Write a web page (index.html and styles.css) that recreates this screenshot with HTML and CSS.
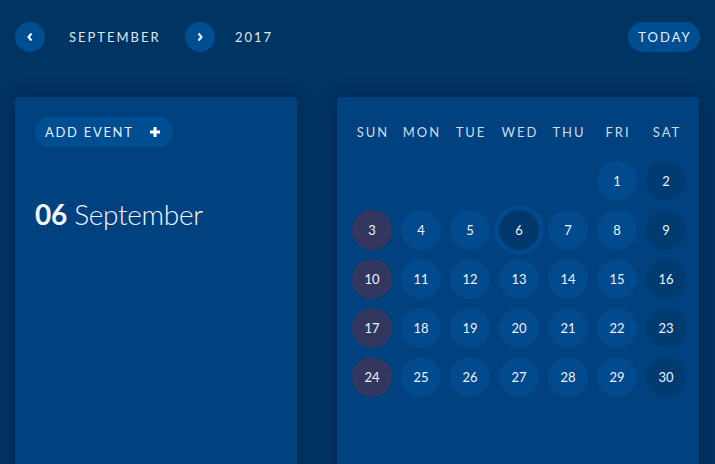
FILE: index.html
```html
<!DOCTYPE html>
<html lang="en">
<head>
<meta charset="utf-8">
<title>Calendar</title>
<link rel="stylesheet" href="styles.css">
</head>
<body>
<header class="topbar">
  <button class="nav-btn" aria-label="Previous month">
    <svg width="8" height="10" viewBox="0 0 8 10"><polyline points="5.5,1.5 2.5,5 5.5,8.5" fill="none" stroke="#fff" stroke-width="2"/></svg>
  </button>
  <span class="month">SEPTEMBER</span>
  <button class="nav-btn" aria-label="Next month">
    <svg width="8" height="10" viewBox="0 0 8 10"><polyline points="2.5,1.5 5.5,5 2.5,8.5" fill="none" stroke="#fff" stroke-width="2"/></svg>
  </button>
  <span class="year">2017</span>
  <button class="today-btn">TODAY</button>
</header>
<main class="main">
  <section class="card events">
    <button class="add-btn">ADD EVENT
      <svg width="10" height="10" viewBox="0 0 10 10"><path d="M3.5 0h3v3.5H10v3H6.5V10h-3V6.5H0v-3h3.5z" fill="#fff"/></svg>
    </button>
    <h2 class="date"><b>06</b> September</h2>
  </section>
  <section class="card calendar">
    <div class="weekdays">
      <span>SUN</span><span>MON</span><span>TUE</span><span>WED</span><span>THU</span><span>FRI</span><span>SAT</span>
    </div>
    <div class="days">
      <span class="empty"></span><span class="empty"></span><span class="empty"></span><span class="empty"></span><span class="empty"></span>
      <span class="day">1</span><span class="day sat">2</span>
      <span class="day sun">3</span><span class="day">4</span><span class="day">5</span><span class="day today">6</span><span class="day">7</span><span class="day">8</span><span class="day sat">9</span>
      <span class="day sun">10</span><span class="day">11</span><span class="day">12</span><span class="day">13</span><span class="day">14</span><span class="day">15</span><span class="day sat">16</span>
      <span class="day sun">17</span><span class="day">18</span><span class="day">19</span><span class="day">20</span><span class="day">21</span><span class="day">22</span><span class="day sat">23</span>
      <span class="day sun">24</span><span class="day">25</span><span class="day">26</span><span class="day">27</span><span class="day">28</span><span class="day">29</span><span class="day sat">30</span>
    </div>
  </section>
</main>
</body>
</html>
```
FILE: styles.css
```css
* { box-sizing: border-box; }
html, body { height: 100%; }
body {
  margin: 0;
  background: #003462;
  font-family: Lato, "Open Sans", sans-serif;
  color: #e6eef7;
  overflow: hidden;
}
button {
  font-family: inherit;
  border: none;
  cursor: pointer;
  color: #e6eef7;
}
.topbar {
  display: flex;
  align-items: center;
  height: 52px;
  padding: 22px 15px 0 15px;
}
.nav-btn {
  width: 30px;
  height: 30px;
  border-radius: 50%;
  background: #004e92;
  padding: 0;
  display: flex;
  align-items: center;
  justify-content: center;
}
.month, .year {
  font-size: 13px;
  letter-spacing: 2px;
  color: #dde8f3;
}
.month { margin: 0 24px; width: 92px; }
.year { margin-left: 20px; }
.today-btn {
  margin-left: auto;
  height: 30px;
  width: 72px;
  padding: 0 0 0 2px;
  border-radius: 15px;
  background: #004e92;
  font-size: 13px;
  letter-spacing: 2px;
}
.main {
  display: flex;
  gap: 40px;
  padding: 45px 16px 0 15px;
}
.card {
  background: #00417f;
  border-radius: 4px;
  height: 400px;
  box-shadow: 0 0 18px rgba(0, 20, 50, 0.45);
}
.events {
  width: 282px;
  padding: 20px;
}
.add-btn {
  height: 30px;
  display: flex;
  align-items: center;
  gap: 16px;
  padding: 0 13px 0 10px;
  border-radius: 15px;
  background: #004e92;
  font-size: 13px;
  letter-spacing: 1.7px;
}
.date {
  margin: 51px 0 0;
  font-size: 28px;
  font-weight: 300;
  line-height: 1.2;
  letter-spacing: -0.3px;
  color: #f2f6fb;
}
.date b { font-weight: 700; }
.calendar {
  width: 362px;
  padding: 25px 14px 0 15px;
}
.weekdays, .days {
  display: grid;
  grid-template-columns: repeat(7, 40px);
  column-gap: 9px;
}
.weekdays span {
  text-align: center;
  font-size: 13px;
  letter-spacing: 2px;
  text-indent: 2px;
  line-height: 20px;
  color: #cfdcea;
  white-space: nowrap;
  margin-right: -6px;
  margin-left: -6px;
}
.days {
  margin-top: 19px;
  row-gap: 9px;
}
.day {
  width: 40px;
  height: 40px;
  border-radius: 50%;
  background: #004a8d;
  display: flex;
  align-items: center;
  justify-content: center;
  font-size: 13px;
  color: #eef3f9;
}
.day.sat { background: #003b72; }
.day.sun { background: #33365f; }
.day.today {
  background: #00386b;
  box-shadow: 0 0 0 5px #004a8d;
}
```
